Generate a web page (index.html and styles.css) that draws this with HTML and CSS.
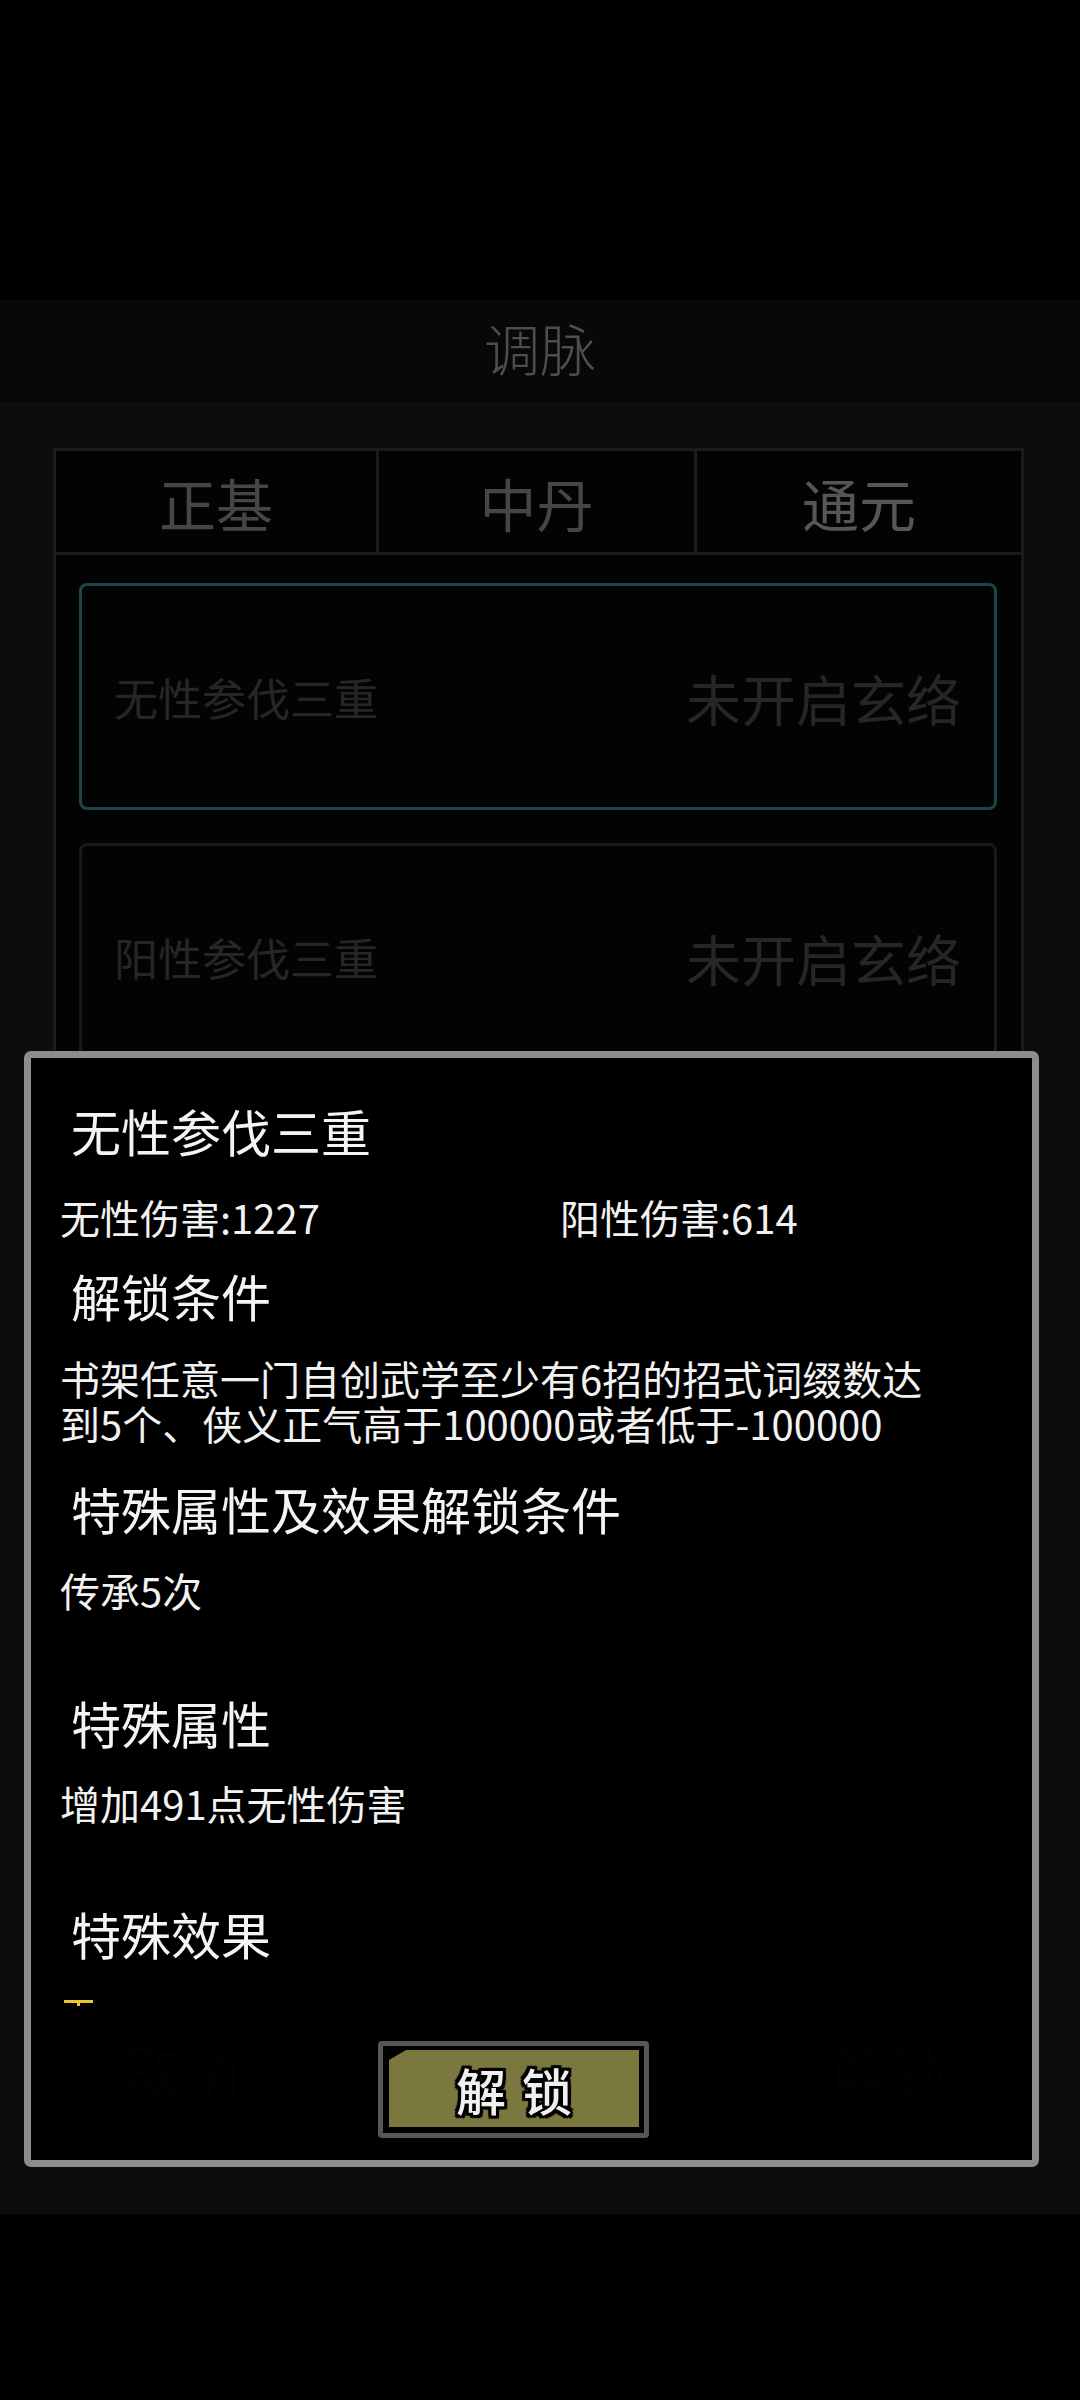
FILE: index.html
```html
<!DOCTYPE html>
<html lang="zh-CN">
<head>
<meta charset="utf-8">
<title>调脉</title>
<link rel="stylesheet" href="styles.css">
</head>
<body>
<div class="screen">
  <div class="top-space"></div>
  <header class="titlebar"><h1 class="title">调脉</h1></header>
  <section class="panel">
    <div class="tabbox">
      <div class="tabs">
        <div class="tab">正基</div>
        <div class="tab">中丹</div>
        <div class="tab active">通元</div>
      </div>
      <div class="list">
        <div class="card selected"><span class="name">无性参伐三重</span><span class="state">未开启玄络</span></div>
        <div class="card"><span class="name">阳性参伐三重</span><span class="state">未开启玄络</span></div>
        <div class="card"><span class="name">阴性参伐三重</span><span class="state">未开启玄络</span></div>
        <div class="card"><span class="name">混元参伐三重</span><span class="state">未开启玄络</span></div>
        <div class="card"><span class="name">外功参伐三重</span><span class="state">未开启玄络</span></div>
      </div>
    </div>
    <div class="actions">
      <div class="abtn">取消</div>
      <div class="abtn">解锁</div>
    </div>
  </section>

  <div class="modal">
    <div class="m-head m-title">无性参伐三重</div>
    <div class="stats">
      <span>无性伤害:1227</span>
      <span>阳性伤害:614</span>
    </div>
    <div class="m-head h-cond">解锁条件</div>
    <div class="m-body b-cond">书架任意一门自创武学至少有6招的招式词缀数达<br>到5个、侠义正气高于100000或者低于-100000</div>
    <div class="m-head h-spec">特殊属性及效果解锁条件</div>
    <div class="m-body b-spec">传承5次</div>
    <div class="m-head h-attr">特殊属性</div>
    <div class="m-body b-attr">增加491点无性伤害</div>
    <div class="m-head h-eff">特殊效果</div>
    <div class="mark"></div>
    <div class="unlock"><div class="unlock-face">解锁</div></div>
  </div>
</div>
</body>
</html>
```

FILE: styles.css
```css
html, body {
  margin: 0;
  padding: 0;
  background: #000;
}
body {
  font-family: "Noto Sans CJK SC", "Noto Sans", sans-serif;
  color: #f2f2f2;
}
.screen {
  position: relative;
  width: 1080px;
  height: 2400px;
  background: #000;
  overflow: hidden;
}
.top-space {
  height: 300px;
}
.titlebar {
  height: 102px;
  background: #080808;
  display: flex;
  align-items: center;
  justify-content: center;
}
.title {
  margin: 0;
  font-size: 56px;
  font-weight: 300;
  line-height: 1;
  color: #4e4e4e;
  padding-bottom: 8px;
}
.panel {
  height: 1812px;
  background: #0c0d0e;
  padding-top: 46px;
  box-sizing: border-box;
}
.tabbox {
  margin: 0 56px 0 53px;
  border: 3px solid #1b1b1b;
  background: #030303;
}
.tabs {
  display: grid;
  grid-template-columns: 323px 318px 1fr;
  height: 101px;
  border-bottom: 3px solid #1b1b1b;
}
.tab {
  display: flex;
  align-items: center;
  justify-content: center;
  font-size: 57px;
  color: #464646;
  border-right: 3px solid #1b1b1b;
}
.tab.active {
  color: #565656;
  border-right: none;
}
.list {
  padding: 28px 24px 30px 23px;
  display: flex;
  flex-direction: column;
  gap: 33px;
}
.card {
  flex: none;
  height: 227px;
  box-sizing: border-box;
  border: 3px solid #191919;
  border-radius: 8px;
  background: #030303;
  display: flex;
  align-items: center;
  justify-content: space-between;
  padding: 0 33px 0 32px;
}
.card.selected {
  border-color: #1d4547;
}
.name {
  font-size: 44px;
  color: #262626;
}
.state {
  font-size: 55px;
  color: #262626;
}
.actions {
  display: flex;
  justify-content: space-between;
  margin: 152px 64px 0 62px;
}
.abtn {
  width: 248px;
  height: 66px;
  box-sizing: border-box;
  border: 2px solid #151515;
  display: flex;
  align-items: center;
  justify-content: center;
  font-size: 55px;
  letter-spacing: 6px;
  color: #3a3a3a;
}

/* modal */
.modal {
  position: absolute;
  left: 24px;
  top: 1051px;
  width: 1015px;
  box-sizing: border-box;
  border: 7px solid #8d8d8d;
  border-radius: 7px;
  background: rgba(0, 0, 0, 0.955);
  padding: 42px 29px 22px 29px;
}
.m-head {
  font-size: 50px;
  line-height: 60px;
  padding-left: 11px;
  color: #f4f4f4;
}
.m-body {
  font-size: 40px;
  line-height: 45px;
  color: #f2f2f2;
}
.stats {
  margin-top: 32px;
  display: grid;
  grid-template-columns: 500px 1fr;
  font-size: 40px;
  line-height: 50px;
}
.h-cond { margin-top: 23px; }
.b-cond { margin-top: 31px; }
.h-spec { margin-top: 32px; }
.b-spec { margin-top: 30px; }
.h-attr { margin-top: 79px; }
.b-attr { margin-top: 29px; }
.h-eff { margin-top: 77px; }
.mark {
  position: relative;
  margin: 37px 0 0 4px;
  width: 29px;
  height: 3px;
  background: #e9c72c;
}
.mark::after {
  content: "";
  position: absolute;
  left: 13px;
  top: 3px;
  width: 3px;
  height: 3px;
  background: #e9c72c;
}
.unlock {
  margin: 38px 0 0 318px;
  width: 271px;
  height: 97px;
  box-sizing: border-box;
  border: 5px solid #575757;
  border-radius: 4px;
  background: #000;
  padding: 4px 5px 6px 6px;
}
.unlock-face {
  height: 100%;
  background: #7a773f;
  clip-path: polygon(17px 0, 100% 0, 100% 100%, 0 100%, 0 10px);
  display: flex;
  align-items: center;
  justify-content: center;
  font-size: 50px;
  font-weight: 500;
  letter-spacing: 16px;
  padding-left: 16px;
  box-sizing: border-box;
  color: #f0f0f0;
  text-shadow:
    3px 0 0 #000, -3px 0 0 #000, 0 3px 0 #000, 0 -3px 0 #000,
    2px 2px 0 #000, -2px -2px 0 #000, 2px -2px 0 #000, -2px 2px 0 #000,
    3px 3px 1px #000, -3px 3px 1px #000, 3px -3px 1px #000, -3px -3px 1px #000;
}
```
